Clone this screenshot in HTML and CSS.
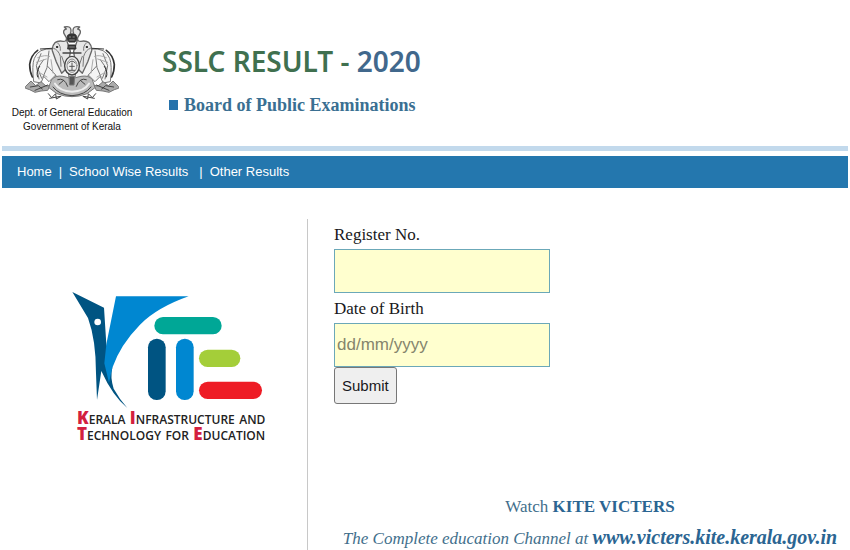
FILE: index.html
```html
<!DOCTYPE html>
<html lang="en">
<head>
<meta charset="utf-8">
<title>SSLC Result - 2020</title>
<link rel="stylesheet" href="styles.css">
</head>
<body>
<header class="header">
  <div class="dept">
    <svg class="emblem" viewBox="78 35 282 216" fill="none" stroke="#777" stroke-width="3" stroke-linecap="round" stroke-linejoin="round" aria-hidden="true">
      <g id="elephant">
        <path fill="#f4f4f4" d="M160 98Q118 94 106 126 98 146 104 196L126 200 134 180 150 196 170 176 176 204 212 204 204 130Z"/>
        <path fill="#e6e6e6" stroke="#666" stroke-width="4" d="M202 38q-11 3-7 14l7 12q2 12-10 11-14-3-24 4-10 10-8 24l12 34 16 34 20-20 6-46-10-30q4-14 10-24 4-8 0-16-4-6-18-3Z"/>
        <path d="M164 96q14 4 20 24l2 30M176 80q10 8 8 22M150 104l-6 50-12 28M126 112l-14 36 8 40M146 150l24 26M134 130l-18 26 12 30M188 120l12 34"/>
        <path stroke="#aaa" d="M116 124q22-10 36-4M112 138l30-10M156 130l6 40M120 168l24 14"/>
        <circle cx="174" cy="92" r="2" fill="#222" stroke="#222"/>
        <path stroke="#333" stroke-width="5" d="M116 102q-20 14-24 42 0 22 8 38"/>
        <path stroke="#333" d="M124 98l34-2M122 150q-12 18-6 32"/>
        <path fill="#aaa" d="M80 210l16-16 14 14 16-12 16 14 12-4-8 16-20 2-18 4-16-8-12-4Z"/>
        <path stroke="#444" d="M94 212l24-4 12 10M108 222l38-16M148 232l10 12 12-12 2 16 14-8M152 246l32-6"/>
      </g>
      <use href="#elephant" transform="translate(438 0) scale(-1 1)"/>
      <path fill="#333" stroke="#333" d="M207 56q12-8 24 0l2 10-5 11h-18l-5-11ZM209 86h20l2 12h-24Z"/>
      <path stroke="#bbb" stroke-width="2" d="M211 62h4M222 62h4M212 71h14M212 92h14"/>
      <path stroke="#444" stroke-width="4" d="M192 110h54"/>
      <ellipse cx="219" cy="148" rx="22" ry="28" fill="#eee" stroke="#444" stroke-width="4"/>
      <ellipse cx="219" cy="148" rx="15" ry="20" stroke="#888" stroke-width="3"/>
      <path stroke="#555" d="M209 140q10-12 20 0M212 150h14M219 140v20M210 162h18"/>
      <path fill="#bbb" d="M158 190q10-14 34-10 18 2 27 12 9-10 27-12 24-4 34 10l8 24-24 18q-45 18-90 0l-24-18Z"/>
      <path fill="#555" d="M211 180h16l-2 26h-12Z"/>
      <path stroke="#eee" stroke-width="6" d="M168 202q14 22 51 24 37-2 51-24"/>
      <path stroke="#444" d="M162 212q18 24 57 26 39-2 57-26M176 190q20-8 30 20M262 190q-20-8-30 20M180 204l14-12M258 204l-14-12"/>
    </svg>
    <p class="dept-name">Dept. of General Education<br>Government of Kerala</p>
  </div>
  <div class="titles">
    <h1 class="title">SSLC RESULT - <span class="year">2020</span></h1>
    <p class="board">Board of Public Examinations</p>
  </div>
</header>
<nav class="nav">
  <a href="#">Home</a><span class="bar">|</span><a href="#">School Wise Results</a><span class="bar bar-wide">|</span><a href="#">Other Results</a>
</nav>
<main class="main">
  <aside class="side">
    <svg class="kite" viewBox="36 30 576 357" aria-hidden="true">
      <path fill="#005482" d="M37 36L132 83 139 193 157 263Q150 290 161 326 179 358 202 384 158 348 124 273L111 360 108 280Q108 180 84 114Z"/>
      <path fill="#0087d1" d="M168 49H386Q292 82 240 134 181 194 157 263L147 308 133 250 139 193Z"/>
      <circle cx="113" cy="126" r="10" fill="#fff"/>
      <rect x="283" y="111" width="202" height="52" rx="26" fill="#00a796"/>
      <rect x="264" y="176" width="53" height="184" rx="26" fill="#005482"/>
      <rect x="348" y="176" width="53" height="184" rx="26" fill="#0087d1"/>
      <rect x="417" y="209" width="124" height="52" rx="26" fill="#a4ce39"/>
      <rect x="417" y="305" width="189" height="52" rx="26" fill="#ee1c25"/>
    </svg>
    <p class="kite-name"><b>K</b>erala <b>I</b>nfrastructure and<br><b>T</b>echnology for <b>E</b>ducation</p>
  </aside>
  <section class="content">
    <form class="form">
      <label for="reg">Register No.</label>
      <input class="field" id="reg" type="text">
      <label for="dob">Date of Birth</label>
      <input class="field" id="dob" type="text" placeholder="dd/mm/yyyy">
      <button class="submit" type="submit">Submit</button>
    </form>
    <div class="promo">
      <p class="watch">Watch <strong>KITE VICTERS</strong></p>
      <p class="channel">The Complete education Channel at <a href="#">www.victers.kite.kerala.gov.in</a></p>
    </div>
  </section>
</main>
</body>
</html>
```
FILE: styles.css
```css
* {
  box-sizing: border-box;
}

body {
  margin: 0 2px;
  background: #fff;
  color: #181820;
  font-family: "Liberation Serif", serif;
  font-size: 17px;
}

p,
h1 {
  margin: 0;
}

.header {
  display: flex;
  gap: 20px;
  padding: 26px 0 12px;
  border-bottom: 5px solid #c2d9ec;
}

.dept {
  width: 140px;
  text-align: center;
}

.emblem {
  display: block;
  width: 94px;
  height: 76px;
  margin: 0 auto;
}

.dept-name {
  padding-top: 4px;
  font: 10px/14px "Liberation Sans", sans-serif;
  color: #111;
  white-space: nowrap;
}

.titles {
  padding-top: 15px;
}

.title {
  font: 600 28px/40px "Noto Sans", sans-serif;
  color: #40704f;
}

.year {
  color: #41688c;
}

.board {
  display: flex;
  align-items: center;
  gap: 6px;
  padding: 13px 0 0 7px;
  font-size: 18px;
  font-weight: bold;
  line-height: 22px;
  color: #3a6f92;
}

.board::before {
  content: "";
  width: 9px;
  height: 10px;
  background: #2672ab;
}

.nav {
  display: flex;
  align-items: center;
  height: 32px;
  margin-top: 5px;
  padding: 0 15px;
  background: #2477ae;
  color: #fff;
  font: 13px/20px "Liberation Sans", sans-serif;
}

.nav a {
  color: inherit;
  text-decoration: none;
}

.bar {
  padding: 0 7px;
}

.bar-wide {
  padding-left: 11px;
}

.main {
  display: flex;
  padding-top: 31px;
}

.side {
  flex: 0 0 306px;
  padding: 71px 0 0 70px;
  border-right: 1px solid #c8c8c8;
}

.kite {
  display: block;
  width: 192px;
  height: 119px;
}

.kite-name {
  padding: 1px 0 0 5px;
  font: 600 17px/16px "Open Sans", sans-serif;
  font-variant: small-caps;
  color: #222;
  white-space: nowrap;
}

.kite-name b {
  color: #d3203f;
}

.content {
  flex: 1;
  padding: 5px 2px 0 26px;
}

.form {
  display: flex;
  flex-direction: column;
  align-items: flex-start;
}

.form label {
  line-height: 22px;
  padding-bottom: 3px;
}

.field {
  width: 216px;
  height: 44px;
  margin-bottom: 5px;
  padding: 2px;
  border: 1px solid #6ba8b8;
  border-radius: 0;
  background: #ffffcf;
  font: 17px "Liberation Sans", sans-serif;
}

.field::placeholder {
  color: #85856c;
}

.submit {
  height: 37px;
  margin-top: -5px;
  padding: 0 7px;
  border: 1px solid #777;
  border-radius: 3px;
  background: #efefef;
  color: #181820;
  font: 15px "Liberation Sans", sans-serif;
}

.promo {
  padding-top: 88px;
  text-align: center;
  line-height: 30px;
  white-space: nowrap;
  color: #426f8c;
}

.promo strong,
.promo a {
  color: #2b6592;
  font-weight: bold;
  text-decoration: none;
}

.channel {
  font-style: italic;
}

.channel a {
  font-size: 20px;
}
```
